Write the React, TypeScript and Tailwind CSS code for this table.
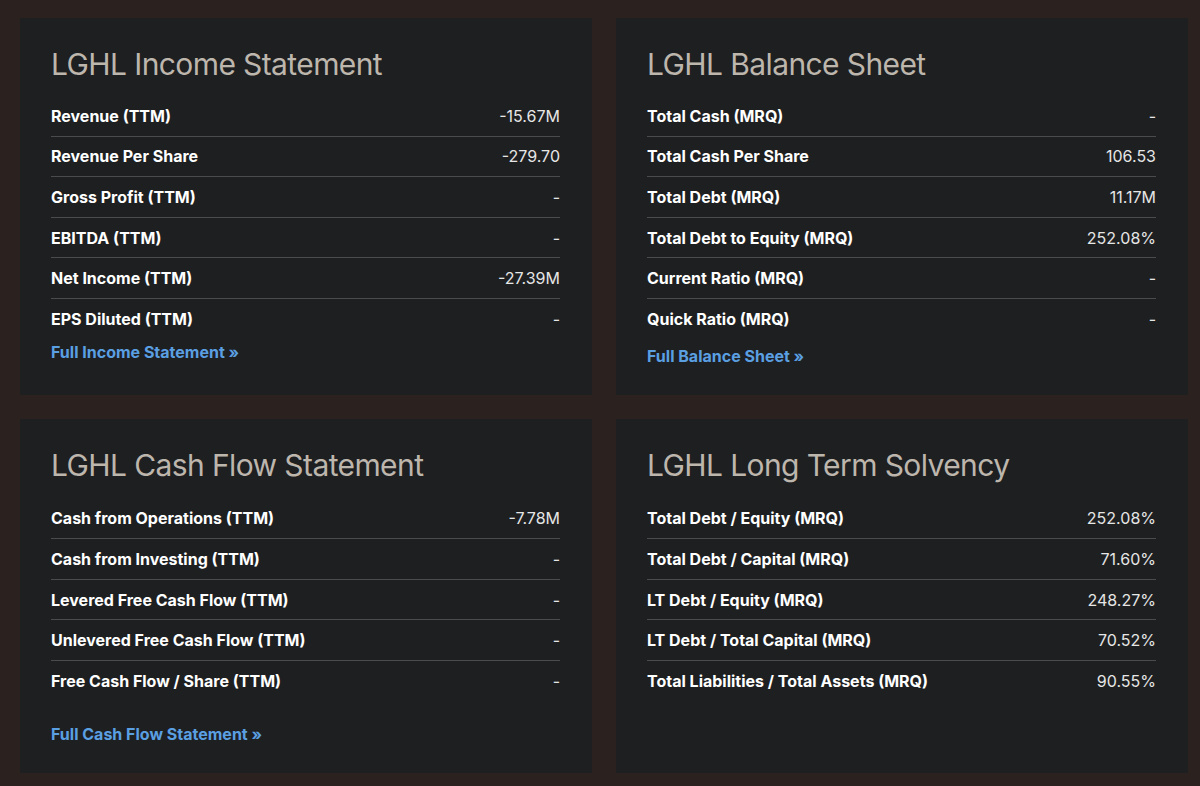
import React from "react";

type Row = { label: string; value: string };

interface PanelProps {
  title: string;
  rows: Row[];
  link?: string;
  linkClass?: string;
  listClass?: string;
}

const incomeRows: Row[] = [
  { label: "Revenue (TTM)", value: "-15.67M" },
  { label: "Revenue Per Share", value: "-279.70" },
  { label: "Gross Profit (TTM)", value: "-" },
  { label: "EBITDA (TTM)", value: "-" },
  { label: "Net Income (TTM)", value: "-27.39M" },
  { label: "EPS Diluted (TTM)", value: "-" },
];

const balanceRows: Row[] = [
  { label: "Total Cash (MRQ)", value: "-" },
  { label: "Total Cash Per Share", value: "106.53" },
  { label: "Total Debt (MRQ)", value: "11.17M" },
  { label: "Total Debt to Equity (MRQ)", value: "252.08%" },
  { label: "Current Ratio (MRQ)", value: "-" },
  { label: "Quick Ratio (MRQ)", value: "-" },
];

const cashRows: Row[] = [
  { label: "Cash from Operations (TTM)", value: "-7.78M" },
  { label: "Cash from Investing (TTM)", value: "-" },
  { label: "Levered Free Cash Flow (TTM)", value: "-" },
  { label: "Unlevered Free Cash Flow (TTM)", value: "-" },
  { label: "Free Cash Flow / Share (TTM)", value: "-" },
];

const solvencyRows: Row[] = [
  { label: "Total Debt / Equity (MRQ)", value: "252.08%" },
  { label: "Total Debt / Capital (MRQ)", value: "71.60%" },
  { label: "LT Debt / Equity (MRQ)", value: "248.27%" },
  { label: "LT Debt / Total Capital (MRQ)", value: "70.52%" },
  { label: "Total Liabilities / Total Assets (MRQ)", value: "90.55%" },
];

function Panel({ title, rows, link, linkClass, listClass }: PanelProps) {
  return (
    <section className="bg-[#1e1f21] pl-[31px] pr-[32px] pt-[28px] pb-[29px]">
      <h2 className="text-[30px] leading-[36px] text-[#bdb6ad] tracking-[-0.6px]">
        {title}
      </h2>
      <ul className={listClass ?? "mt-[14px]"}>
        {rows.map((r, i) => (
          <li
            key={r.label}
            className={`flex items-center justify-between h-[40.6px] text-[16px] ${
              i < rows.length - 1 ? "border-b border-[#4a4b4d]" : ""
            }`}
          >
            <span className="font-bold text-white">{r.label}</span>
            <span className="text-[#e6e6e6]">{r.value}</span>
          </li>
        ))}
      </ul>
      {link && (
        <a
          href="#"
          className={`block text-[16px] leading-5 font-bold text-[#5b9fe3] ${linkClass ?? ""}`}
        >
          {link} »
        </a>
      )}
    </section>
  );
}

export default function App() {
  return (
    <div
      className="min-h-[786px] w-[1200px] bg-[#2b221f] pl-[20px] pt-[18px] pb-[13px]"
      style={{ fontFamily: "Inter, 'Liberation Sans', sans-serif" }}
    >
      <div className="grid grid-cols-[572px_572px] gap-[24px]">
        <Panel
          title="LGHL Income Statement"
          rows={incomeRows}
          link="Full Income Statement"
          linkClass="mt-[2px]"
        />
        <Panel
          title="LGHL Balance Sheet"
          rows={balanceRows}
          link="Full Balance Sheet"
          linkClass="mt-[6px]"
        />
        <Panel
          title="LGHL Cash Flow Statement"
          rows={cashRows}
          link="Full Cash Flow Statement"
          listClass="mt-[16px]"
          linkClass="mt-[22px]"
        />
        <Panel
          title="LGHL Long Term Solvency"
          rows={solvencyRows}
          listClass="mt-[16px]"
        />
      </div>
    </div>
  );
}
